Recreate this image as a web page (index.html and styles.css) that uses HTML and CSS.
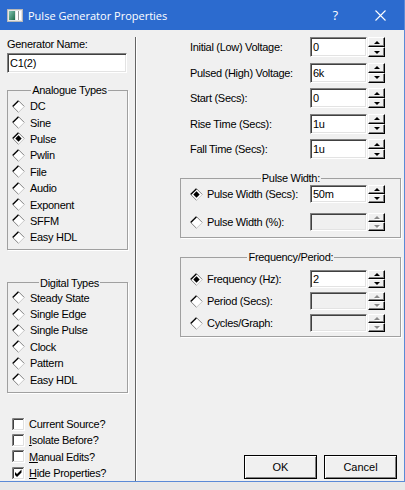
FILE: index.html
```html
<!DOCTYPE html>
<html>
<head>
<meta charset="utf-8">
<title>Pulse Generator Properties</title>
<link rel="stylesheet" href="styles.css">
</head>
<body>
<svg class="defs" width="0" height="0" aria-hidden="true">
  <defs>
    <linearGradient id="ig" x1="0" y1="0" x2="1" y2="1">
      <stop offset="0" stop-color="#7fc2b0"/>
      <stop offset="1" stop-color="#1f6b4a"/>
    </linearGradient>
    <symbol id="radio" viewBox="0 0 13 13">
      <path d="M6.5 0.5L12.5 6.5L6.5 12.5L0.5 6.5Z" fill="#fff"/>
      <path d="M0.7 6.5L6.5 0.7" stroke="#000" stroke-width="1.4" fill="none"/>
      <path d="M6.5 0.7L12.3 6.5" stroke="#808080" fill="none"/>
      <path d="M0.7 6.5L6.5 12.3" stroke="#808080" fill="none"/>
      <path d="M6.5 12.3L12.3 6.5" stroke="#c8c8c8" fill="none"/>
    </symbol>
    <symbol id="radio-on" viewBox="0 0 13 13">
      <use href="#radio"/>
      <path d="M6.5 3.3L9.7 6.5L6.5 9.7L3.3 6.5Z" fill="#000"/>
    </symbol>
    <symbol id="cb" viewBox="0 0 13 13">
      <rect x="0" y="0" width="13" height="13" fill="#fff"/>
      <path d="M0.5 12.5V0.5H12.5" stroke="#808080" fill="none"/>
      <path d="M1.5 11.5V1.5H11.5" stroke="#404040" fill="none"/>
      <path d="M0 12.5H12.5V0" stroke="#fff" fill="none"/>
      <path d="M1 11.5H11.5V1" stroke="#dfdfdf" fill="none"/>
    </symbol>
    <symbol id="cb-on" viewBox="0 0 13 13">
      <use href="#cb"/>
      <path d="M3 5L5 7L9.5 2.5V5.5L5 10L3 8Z" fill="#000"/>
    </symbol>
  </defs>
</svg>

<div class="window">
  <div class="titlebar">
    <svg class="app-icon" width="16" height="13" viewBox="0 0 16 13">
      <rect x="0.5" y="0.5" width="15" height="12" fill="#e6e6e6" stroke="#b8b8b8"/>
      <rect x="2" y="2" width="6" height="9" fill="url(#ig)"/>
      <rect x="9" y="2" width="5" height="9" fill="#fff"/>
      <rect x="11" y="2" width="1" height="9" fill="#9a9a9a"/>
    </svg>
    <span class="title">Pulse Generator Properties</span>
    <span class="help">?</span>
    <svg class="close" width="11" height="11" viewBox="0 0 11 11">
      <path d="M0.5 0.5L10.5 10.5M10.5 0.5L0.5 10.5" stroke="#fff" stroke-width="1.1" fill="none"/>
    </svg>
  </div>

  <div class="client">
    <div class="left">
      <div class="name-lbl">Generator Name:</div>
      <div class="field name-field">C1(2)</div>

      <fieldset class="group analog">
        <legend>Analogue Types</legend>
        <div class="opt"><svg class="rd"><use href="#radio"/></svg><span>DC</span></div>
        <div class="opt"><svg class="rd"><use href="#radio"/></svg><span>Sine</span></div>
        <div class="opt"><svg class="rd"><use href="#radio-on"/></svg><span>Pulse</span></div>
        <div class="opt"><svg class="rd"><use href="#radio"/></svg><span>Pwlin</span></div>
        <div class="opt"><svg class="rd"><use href="#radio"/></svg><span>File</span></div>
        <div class="opt"><svg class="rd"><use href="#radio"/></svg><span>Audio</span></div>
        <div class="opt"><svg class="rd"><use href="#radio"/></svg><span>Exponent</span></div>
        <div class="opt"><svg class="rd"><use href="#radio"/></svg><span>SFFM</span></div>
        <div class="opt"><svg class="rd"><use href="#radio"/></svg><span>Easy HDL</span></div>
      </fieldset>

      <fieldset class="group digital">
        <legend>Digital Types</legend>
        <div class="opt"><svg class="rd"><use href="#radio"/></svg><span>Steady State</span></div>
        <div class="opt"><svg class="rd"><use href="#radio"/></svg><span>Single Edge</span></div>
        <div class="opt"><svg class="rd"><use href="#radio"/></svg><span>Single Pulse</span></div>
        <div class="opt"><svg class="rd"><use href="#radio"/></svg><span>Clock</span></div>
        <div class="opt"><svg class="rd"><use href="#radio"/></svg><span>Pattern</span></div>
        <div class="opt"><svg class="rd"><use href="#radio"/></svg><span>Easy HDL</span></div>
      </fieldset>

      <div class="checks">
        <div class="chk"><svg class="cb"><use href="#cb"/></svg><span>Current Source?</span></div>
        <div class="chk"><svg class="cb"><use href="#cb"/></svg><span><u>I</u>solate Before?</span></div>
        <div class="chk"><svg class="cb"><use href="#cb"/></svg><span><u>M</u>anual Edits?</span></div>
        <div class="chk"><svg class="cb"><use href="#cb-on"/></svg><span><u>H</u>ide Properties?</span></div>
      </div>
    </div>

    <div class="divider"></div>

    <div class="right">
      <div class="params">
        <div class="prow"><span class="plbl">Initial (Low) Voltage:</span><div class="field val">0</div><div class="spin"><i class="up"></i><i class="dn"></i></div></div>
        <div class="prow"><span class="plbl">Pulsed (High) Voltage:</span><div class="field val">6k</div><div class="spin"><i class="up"></i><i class="dn"></i></div></div>
        <div class="prow"><span class="plbl">Start (Secs):</span><div class="field val">0</div><div class="spin"><i class="up"></i><i class="dn"></i></div></div>
        <div class="prow"><span class="plbl">Rise Time (Secs):</span><div class="field val">1u</div><div class="spin"><i class="up"></i><i class="dn"></i></div></div>
        <div class="prow"><span class="plbl">Fall Time (Secs):</span><div class="field val">1u</div><div class="spin"><i class="up"></i><i class="dn"></i></div></div>
      </div>

      <fieldset class="group rgroup pulse">
        <legend>Pulse Width:</legend>
        <div class="grow"><svg class="rd"><use href="#radio-on"/></svg><span class="glbl">Pulse Width (Secs):</span><div class="field val">50m</div><div class="spin"><i class="up"></i><i class="dn"></i></div></div>
        <div class="grow"><svg class="rd"><use href="#radio"/></svg><span class="glbl">Pulse Width (%):</span><div class="field val off"></div><div class="spin off"><i class="up"></i><i class="dn"></i></div></div>
      </fieldset>

      <fieldset class="group rgroup freq">
        <legend>Frequency/Period:</legend>
        <div class="grow"><svg class="rd"><use href="#radio-on"/></svg><span class="glbl">Frequency (Hz):</span><div class="field val">2</div><div class="spin"><i class="up"></i><i class="dn"></i></div></div>
        <div class="grow"><svg class="rd"><use href="#radio"/></svg><span class="glbl">Period (Secs):</span><div class="field val off"></div><div class="spin off"><i class="up"></i><i class="dn"></i></div></div>
        <div class="grow"><svg class="rd"><use href="#radio"/></svg><span class="glbl">Cycles/Graph:</span><div class="field val off"></div><div class="spin off"><i class="up"></i><i class="dn"></i></div></div>
      </fieldset>

      <div class="buttons">
        <button class="btn">OK</button>
        <button class="btn">Cancel</button>
      </div>
    </div>
  </div>
</div>
</body>
</html>
```

FILE: styles.css
```css
* { box-sizing: border-box; }
html, body { margin: 0; padding: 0; }
body {
  width: 405px;
  height: 490px;
  overflow: hidden;
  background: #e8e8e8;
  font-family: "Liberation Sans", Arial, sans-serif;
  font-size: 11px;
  letter-spacing: -0.3px;
  color: #000;
}
.defs { position: absolute; width: 0; height: 0; }

.window {
  width: 405px;
  height: 482px;
  background: #f0f0f0;
  border-right: 1px solid #5b8ad6;
  border-bottom: 1px solid #5b8ad6;
  display: flex;
  flex-direction: column;
}

/* title bar */
.titlebar {
  flex: none;
  height: 30px;
  background: #2c6bcf;
  color: #fff;
  display: flex;
  align-items: center;
  padding-left: 7px;
}
.app-icon { flex: none; }
.title {
  flex: 1;
  margin-left: 5px;
  font-family: "Open Sans", "Noto Sans", sans-serif;
  font-size: 11px;
  letter-spacing: 0;
}
.help {
  font-family: "Open Sans", "Noto Sans", sans-serif;
  font-size: 13px;
  letter-spacing: 0;
  margin-right: 37px;
}
.close { flex: none; margin-right: 18px; }

/* client area */
.client { flex: 1; display: flex; min-height: 0; }
.left {
  width: 135px;
  flex: none;
  padding-left: 7px;
  display: flex;
  flex-direction: column;
}
.divider {
  flex: none;
  width: 2px;
  margin-top: 7px;
  border-left: 1px solid #646464;
  border-right: 1px solid #ffffff;
}
.right { flex: 1; display: flex; flex-direction: column; }

.name-lbl { margin-top: 8px; line-height: 13px; }
.name-field { margin-top: 2px; width: 120px; height: 20px; }

/* fields */
.field {
  background: #fff;
  border: 1px solid;
  border-color: #808080 #fff #fff #808080;
  box-shadow: inset 1px 1px #404040, inset -1px -1px #e3e3e3;
  padding-left: 2px;
  line-height: 18px;
  white-space: nowrap;
}
.field.off { background: #f0f0f0; }

/* group boxes */
.group {
  margin: 0;
  min-inline-size: 0;
  border: 1px solid #a0a0a0;
  box-shadow: 1px 1px 0 #fff;
}
.group legend {
  margin: 0 auto;
  padding: 0 1px;
  line-height: 12px;
}
.analog { margin-top: 11px; width: 121px; padding: 2px 0 3px 4px; }
.digital { margin-top: 27px; width: 121px; padding: 1px 0 4px 4px; }

.opt { height: 16.4px; display: flex; align-items: center; }
.rd { width: 13px; height: 13px; flex: none; }
.opt span { margin-left: 5px; white-space: nowrap; }

.checks { margin-top: 23px; padding-left: 5px; }
.chk { height: 16.4px; display: flex; align-items: center; }
.cb { width: 13px; height: 13px; flex: none; }
.chk span { margin-left: 4px; white-space: nowrap; }

/* parameter rows */
.params { margin-top: 7px; display: flex; flex-direction: column; gap: 5.5px; }
.prow { height: 20px; display: flex; align-items: center; padding-left: 53px; }
.plbl { width: 120px; flex: none; white-space: nowrap; }
.val { width: 57px; height: 20px; flex: none; }
.spin {
  width: 17px;
  height: 20px;
  margin-left: 1px;
  flex: none;
  display: flex;
  flex-direction: column;
}
.spin i {
  flex: 1;
  display: flex;
  align-items: center;
  justify-content: center;
  background: #f0f0f0;
  border: 1px solid;
  border-color: #fff #000 #000 #fff;
  box-shadow: inset -1px -1px #808080;
}
.spin i::after {
  content: "";
  width: 0;
  height: 0;
  border-left: 3px solid transparent;
  border-right: 3px solid transparent;
}
.spin .up::after { border-bottom: 3px solid #000; }
.spin .dn::after { border-top: 3px solid #000; }
.spin.off .up::after { border-bottom-color: #8a8a8a; filter: drop-shadow(1px 1px 0 #fff); }
.spin.off .dn::after { border-top-color: #8a8a8a; filter: drop-shadow(1px 1px 0 #fff); }

/* right group boxes */
.rgroup { margin-left: 43px; width: 221px; padding-left: 9px; }
.pulse { margin-top: 13px; padding-top: 1px; padding-bottom: 6px; display: flex; flex-direction: column; gap: 10px; }
.freq { margin-top: 13px; padding-top: 7px; padding-bottom: 4px; display: flex; flex-direction: column; gap: 4px; }
.grow { height: 18px; display: flex; align-items: center; }
.grow .val { height: 18px; line-height: 16px; }
.grow .spin { height: 18px; }
.glbl { margin-left: 4px; width: 103px; flex: none; white-space: nowrap; }

/* buttons */
.buttons {
  margin-top: auto;
  display: flex;
  justify-content: flex-end;
  gap: 7px;
  padding: 0 7px 2px 0;
}
.btn {
  width: 73px;
  height: 24px;
  margin: 0;
  padding: 0;
  font: inherit;
  letter-spacing: 0;
  color: #000;
  background: #f0f0f0;
  border: 1px solid #000;
  box-shadow: inset 1px 1px #fff, inset -1px -1px #808080;
}
```
